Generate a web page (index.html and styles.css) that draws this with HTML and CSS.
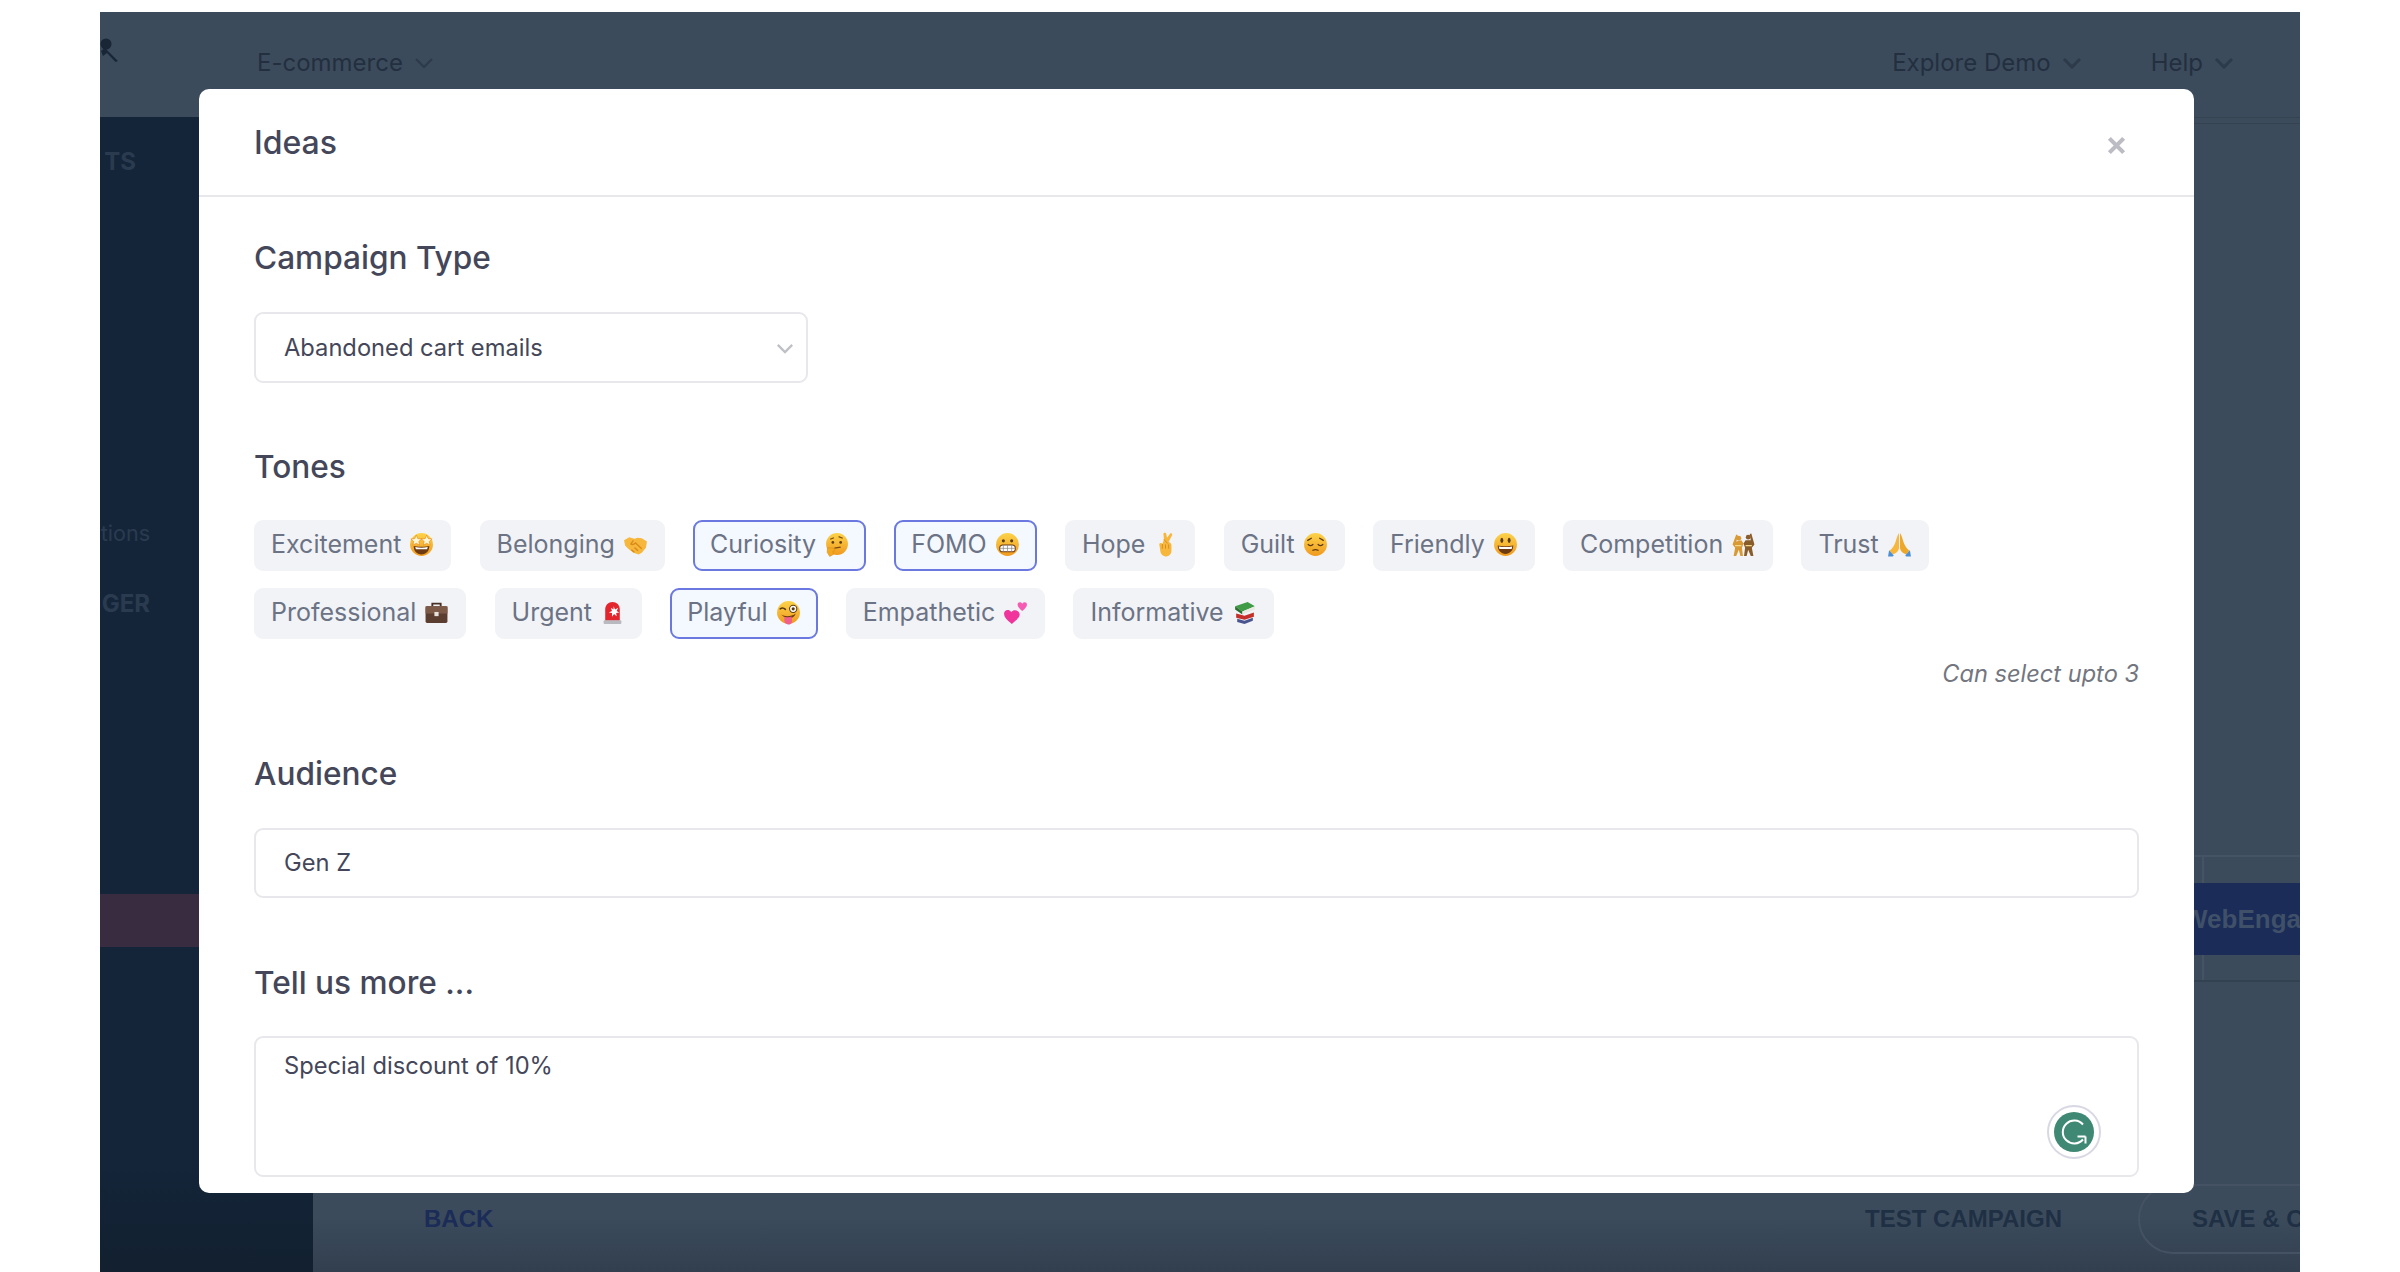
FILE: index.html
```html
<!DOCTYPE html>
<html lang="en">
<head>
<meta charset="utf-8">
<title>Ideas</title>
<link rel="stylesheet" href="styles.css">
</head>
<body>
<svg class="defs" width="0" height="0" aria-hidden="true">
  <defs>
    <linearGradient id="face" x1="0" y1="0" x2="0" y2="1"><stop offset="0" stop-color="#fcd34a"/><stop offset="1" stop-color="#f09a1e"/></linearGradient>
    <symbol id="e-star" viewBox="0 0 24 24"><circle cx="12" cy="12" r="11" fill="url(#face)"/><path d="M4.500 13.500c3 1 12 1 15 0 0 5-3 8-7.500 8s-7.500-3-7.500-8z" fill="#6d3a12"/><path d="M6 14.500c4 .8 8 .8 12 0l-.6 2H6.600z" fill="#fff"/><path d="M7 3l1.500 3.400 3.700.3-2.800 2.400.9 3.600L7 10.800l-3.300 1.900.9-3.600-2.800-2.400 3.700-.3zM17 3l1.500 3.400 3.700.3-2.800 2.400.9 3.600-3.300-1.900-3.300 1.900.9-3.600-2.800-2.400 3.700-.3z" fill="#fff8d8" stroke="#e8871c" stroke-width=".6"/></symbol>
    <symbol id="e-shake" viewBox="0 0 24 24"><path d="M1 8l5-3 5 1.500 3-1 4 .5 5 3-1 6-4 5-3 1.500-5-1.500-5-4-3-3z" fill="#f6b73c"/><path d="M10 8l-2.500 3.500c1.500 1 3 .5 4.500-1l6 5.500M8 17l3 2.500M11 15l3.500 3" fill="none" stroke="#d98a1a" stroke-width="1.300"/></symbol>
    <symbol id="e-think" viewBox="0 0 24 24"><circle cx="12.500" cy="11.500" r="10.500" fill="url(#face)"/><path d="M6 7l3.500-1.500M14 4.500l4 1.500" stroke="#7a4a10" stroke-width="1.200" fill="none"/><circle cx="8.500" cy="10" r="1.300" fill="#5c3a12"/><circle cx="16" cy="10" r="1.300" fill="#5c3a12"/><path d="M10 15.500l6-1" stroke="#7a4a10" stroke-width="1.300"/><path d="M3.500 15l6 .5 1 2.500-2 .5.500 3-3.500 2-2.500-4z" fill="#f2a81f" stroke="#d98a1a" stroke-width=".5"/></symbol>
    <symbol id="e-grim" viewBox="0 0 24 24"><circle cx="12" cy="12" r="11" fill="url(#face)"/><circle cx="8" cy="8.500" r="1.500" fill="#5c3a12"/><circle cx="16" cy="8.500" r="1.500" fill="#5c3a12"/><rect x="4.500" y="12.500" width="15" height="6.500" rx="3" fill="#fff" stroke="#6d3a12"/><path d="M8 12.500v6.500M12 12.500v6.500M16 12.500v6.500M4.500 15.700h15" stroke="#888" stroke-width=".7"/></symbol>
    <symbol id="e-cross" viewBox="0 0 24 24"><path d="M6 11.500c.8-1.200 2.200-1.200 3 0L10.500 7 10 2c0-1.500 2.300-1.800 2.700-.2l.8 3.700 2.800-3.800c1-1.200 2.800 0 2 1.500l-3.300 6.300c2 .5 2.700 2 2.700 3.500v5c0 3.200-2.500 5.500-5 5.500s-5.500-2-5.700-5.500z" fill="#f6b73c"/><path d="M10.500 7l3.500 4M9 11.500V16M12 12v4M15 12v4" stroke="#d98a1a" stroke-width=".9" fill="none"/></symbol>
    <symbol id="e-pens" viewBox="0 0 24 24"><circle cx="12" cy="12" r="11" fill="url(#face)"/><path d="M4.500 8l3.500-2M19.500 8L16 6M5 12c1.500 1.500 3 1.500 4.500 0M14.500 12c1.500 1.500 3 1.500 4.500 0M9.500 17.500c1.500-.7 3.500-.7 5 0" fill="none" stroke="#5c3a12" stroke-width="1.200" stroke-linecap="round"/></symbol>
    <symbol id="e-grin" viewBox="0 0 24 24"><circle cx="12" cy="12" r="11" fill="url(#face)"/><ellipse cx="8.500" cy="8" rx="1.400" ry="2.500" fill="#5c3a12"/><ellipse cx="15.500" cy="8" rx="1.400" ry="2.500" fill="#5c3a12"/><path d="M4.500 13c4 1 11 1 15 0 0 5-3.500 8-7.500 8s-7.500-3-7.500-8z" fill="#6d3a12"/><path d="M5.500 13.800c4 .8 9 .8 13 0l-.6 2.500H6.100z" fill="#fff"/></symbol>
    <symbol id="e-wrest" viewBox="0 0 24 24"><circle cx="7.500" cy="6" r="2.300" fill="#d99a35"/><circle cx="16.500" cy="5" r="2.300" fill="#8a5c2a"/><path d="M5 9l5-1 2 3-1.500 4 1 8H9l-1.500-6L5 23H2.500L4 15 1.500 12 5 2.500l1.500.5L5.500 8z" fill="#d99a35"/><path d="M19 8l-5 0-2 3 1.500 4-1 8H15l1.500-6 2.500 6h2.500L20 15l2.500-3L19.500 1.500l-1.500.5L19 8z" fill="#8a5c2a"/><path d="M4 13h6M14 13h6" stroke="#f2d98a" stroke-width="1.200"/></symbol>
    <symbol id="e-pray" viewBox="0 0 24 24"><path d="M11.500 1C10 3 9 7 8 10c-1 3-3 6-5.500 8l3 3.500c3-1 5.500-3 6-6z" fill="#f6b73c"/><path d="M12.500 1C14 3 15 7 16 10c1 3 3 6 5.500 8l-3 3.500c-3-1-5.500-3-6-6z" fill="#eda82c"/><path d="M2 17.500l4.500 5-1 1H1zM22 17.500l-4.500 5 1 1H23z" fill="#4a8fd8"/></symbol>
    <symbol id="e-case" viewBox="0 0 24 24"><path d="M8 6V3.500h8V6" fill="none" stroke="#4a3024" stroke-width="1.800"/><rect x="1.500" y="6" width="21" height="16" rx="1.500" fill="#5c3e30"/><rect x="1.500" y="6" width="21" height="7" fill="#7d5a48"/><rect x="10" y="11.500" width="4" height="4" fill="#e9e2dc"/></symbol>
    <symbol id="e-siren" viewBox="0 0 24 24"><path d="M5 20V9c0-4 3-7 7-7s7 3 7 7v11z" fill="#e3262e"/><path d="M13 6l1.500 3 3-1.500-1.500 3 2.500 1.500-3 .5.500 3-2.500-2-2 2.500v-3.500l-3-.5 3-1.500-1-3 2.500 1.500z" fill="#fff"/><rect x="3.500" y="19.500" width="17" height="3.500" rx="1" fill="#b9b9c0"/></symbol>
    <symbol id="e-wink" viewBox="0 0 24 24"><circle cx="12" cy="12" r="11" fill="url(#face)"/><path d="M4 8.500c1.500-1 3.500-1 5 .5" fill="none" stroke="#5c3a12" stroke-width="1.500" stroke-linecap="round"/><circle cx="16.500" cy="8.500" r="3.500" fill="#fff" stroke="#5c3a12"/><circle cx="16.500" cy="8.500" r="1.500" fill="#5c3a12"/><path d="M5 14c4 2.500 10 2 14-1-1 3-3.500 4.500-6 5-1-.5-5.500-1-8-4z" fill="#6d3a12"/><path d="M8 16c2 .8 5 .8 7-.2l.5 5c-.5 2-2.500 3-4 2.800S8 22 8 20z" fill="#f0608c"/></symbol>
    <symbol id="e-hearts" viewBox="0 0 24 24"><path d="M8.500 23C4 19.500 1 16.500 1 13c0-3.500 4.500-5 7-1.500C10.500 8.500 16 10 16 14c0 3-4 6-7.500 9z" fill="#f0349c"/><path d="M18.500 10.500C16 8.500 14 6.500 14 4.500c0-2.500 3-3 4.500-1 1.500-2 4.500-1.500 4.500 1 0 2-2 4-4.500 6z" fill="#f65bb4"/></symbol>
    <symbol id="e-books" viewBox="0 0 24 24"><path d="M3 6l12-4 7 4-12 5z" fill="#3f9b45"/><path d="M3 6l7 5v3L3 9z" fill="#2a6f30"/><path d="M10 11l12-5v3l-12 5z" fill="#e9e9e2"/><path d="M4 13l8 2 9-3v4l-9 3-8-2z" fill="#c42f2a"/><path d="M5 18l7 2 8-3v3l-8 3-7-2z" fill="#4a558f"/></symbol>
  </defs>
</svg>

<div class="frame">
  <header class="topbar">
    <svg class="logo" viewBox="0 0 18 24" aria-hidden="true"><circle cx="6" cy="6" r="5.500" fill="#182636"/><path d="M1 13L5 10l13 13-2.500 1L7 15l-4 3z" fill="#182636"/></svg>
    <span class="crumb">E-commerce<svg class="chev" viewBox="0 0 20 12"><path d="M2 2l8 8 8-8"/></svg></span>
    <nav class="topnav">
      <span class="crumb">Explore Demo<svg class="chev chev-strong" viewBox="0 0 20 12"><path d="M2 2l8 8 8-8"/></svg></span>
      <span class="crumb">Help<svg class="chev chev-strong" viewBox="0 0 20 12"><path d="M2 2l8 8 8-8"/></svg></span>
    </nav>
  </header>

  <div class="workspace">
    <aside class="sidebar">
      <div class="side-item side-head side-a">TS</div>
      <div class="side-item side-b">tions</div>
      <div class="side-item side-head side-c">GER</div>
      <div class="side-active"></div>
    </aside>
    <main class="main">
      <div class="stage">
        <div class="panel">
          <div class="banner"><span>WebEnga</span></div>
        </div>
      </div>
      <footer class="footer">
        <span class="back">BACK</span>
        <span class="test">TEST CAMPAIGN</span>
        <span class="save">SAVE &amp; C</span>
      </footer>
    </main>
  </div>

  <section class="modal">
    <div class="modal-head">
      <h1 class="modal-title">Ideas</h1>
      <svg class="close" viewBox="0 0 16 16" aria-label="Close"><path d="M2 2l12 12M14 2L2 14"/></svg>
    </div>
    <div class="modal-body">
      <h2 class="label label-type">Campaign Type</h2>
      <div class="field select">Abandoned cart emails<svg class="select-chev" viewBox="0 0 20 12"><path d="M2 2l8 8 8-8"/></svg></div>

      <h2 class="label label-tones">Tones</h2>
      <div class="tags">
        <span class="tag">Excitement <svg class="emoji"><use href="#e-star"/></svg></span>
        <span class="tag">Belonging <svg class="emoji"><use href="#e-shake"/></svg></span>
        <span class="tag on">Curiosity <svg class="emoji"><use href="#e-think"/></svg></span>
        <span class="tag on">FOMO <svg class="emoji"><use href="#e-grim"/></svg></span>
        <span class="tag">Hope <svg class="emoji"><use href="#e-cross"/></svg></span>
        <span class="tag">Guilt <svg class="emoji"><use href="#e-pens"/></svg></span>
        <span class="tag">Friendly <svg class="emoji"><use href="#e-grin"/></svg></span>
        <span class="tag">Competition <svg class="emoji"><use href="#e-wrest"/></svg></span>
        <span class="tag">Trust <svg class="emoji"><use href="#e-pray"/></svg></span>
        <span class="tag">Professional <svg class="emoji"><use href="#e-case"/></svg></span>
        <span class="tag">Urgent <svg class="emoji"><use href="#e-siren"/></svg></span>
        <span class="tag on">Playful <svg class="emoji"><use href="#e-wink"/></svg></span>
        <span class="tag">Empathetic <svg class="emoji"><use href="#e-hearts"/></svg></span>
        <span class="tag">Informative <svg class="emoji"><use href="#e-books"/></svg></span>
      </div>
      <p class="hint">Can select upto 3</p>

      <h2 class="label label-aud">Audience</h2>
      <div class="field input">Gen Z</div>

      <h2 class="label label-more">Tell us more ...</h2>
      <div class="field area">
        Special discount of 10%
        <span class="grammarly">
          <svg viewBox="0 0 40 40" aria-hidden="true"><circle cx="20" cy="20" r="20" fill="#3f8874"/><path d="M29 12.500A11.500 11.500 0 1 0 29 27.500M31.500 24.500H23.500M31.500 24.500v7" fill="none" stroke="#fff" stroke-width="2"/></svg>
        </span>
      </div>
    </div>
  </section>
</div>
</body>
</html>
```

FILE: styles.css
```css
* { box-sizing: border-box; }
html, body { margin: 0; height: 1272px; background: #fff; overflow: hidden; }
body { font-family: Inter, "Noto Sans", sans-serif; padding: 12px 100px 0; }
.defs { position: absolute; }

.frame {
  position: relative;
  height: 1260px;
  overflow: hidden;
  background: #3b4b5c;
  display: flex;
  flex-direction: column;
}

.topbar {
  height: 105px;
  flex: none;
  display: flex;
  align-items: flex-start;
  padding: 36px 66px 0 157px;
  font-size: 24px;
  color: #232f3f;
  position: relative;
}
.logo { position: absolute; left: 0; top: 26px; width: 18px; height: 24px; }
.crumb { display: inline-flex; align-items: center; line-height: 29px; }
.chev { width: 20px; height: 12px; margin-left: 11px; fill: none; stroke: #2c3a4a; stroke-width: 2; }
.chev-strong { stroke-width: 3; margin-left: 11px; }
.topnav { margin-left: auto; display: flex; gap: 69px; }

.workspace { flex: 1; display: flex; min-height: 0; }
.sidebar {
  width: 213px;
  flex: none;
  background: linear-gradient(#14253a 90%, #12202f);
  display: flex;
  flex-direction: column;
}
.side-item { width: 50px; display: flex; justify-content: flex-end; white-space: nowrap; font-size: 21.500px; line-height: 30px; color: #2b3b4f; }
.side-head { font-size: 24px; font-weight: 700; }
.side-a { width: 36px; margin-top: 30px; }
.side-b { margin-top: 341px; }
.side-c { margin-top: 41px; }
.side-active { height: 53px; margin-top: 275px; background: #3a2c40; }

.main { flex: 1; display: flex; flex-direction: column; min-width: 0; }
.stage { flex: 1; display: flex; flex-direction: column; justify-content: flex-end; padding-bottom: 181px; border-top: 1px solid #34434f; position: relative; }
.stage::before { content: ""; position: absolute; left: 0; right: 0; top: 5px; height: 1px; background: #34434f; }
.panel { position: relative; border-top: 2px solid #455464; border-bottom: 2px solid #334251; padding: 26px 0 25px; margin-left: 1400px; }
.panel::before { content: ""; position: absolute; left: 489px; top: 0; bottom: 0; width: 2px; background: #455464; }
.banner { position: relative; height: 72px; background: #1a2c57; font-family: "Liberation Sans", Arial, sans-serif; font-weight: 700; font-size: 26px; color: #3f5068; display: flex; align-items: center; padding-left: 470px; white-space: nowrap; overflow: hidden; }

.footer {
  height: 109px;
  flex: none;
  display: flex;
  align-items: center;
  padding: 2px 0 0 111px;
  font-family: "Liberation Sans", Arial, sans-serif;
  font-weight: 700;
  font-size: 24px;
  color: #1f3044;
  white-space: nowrap;
  background: linear-gradient(#3b4b5c, #3b4b5c 50%, #323f4f);
}
.back { color: #1a2c57; }
.test { margin-left: auto; }
.save {
  margin-left: 76px;
  margin-right: -116px;
  width: 278px;
  height: 70px;
  display: flex;
  align-items: center;
  padding-left: 52px;
  border: 2px solid #445263;
  border-radius: 35px;
}

.modal {
  position: absolute;
  left: 99px;
  top: 77px;
  width: 1995px;
  height: 1104px;
  background: #fff;
  border-radius: 10px;
  overflow: hidden;
  color: #44475a;
}
.modal-head {
  height: 108px;
  display: flex;
  align-items: center;
  justify-content: space-between;
  padding: 0 68px 0 55px;
  border-bottom: 2px solid #e8e8ec;
}
.modal-title { margin: 2px 0 0; font-size: 32px; font-weight: 500; line-height: 40px; }
.close { width: 19px; height: 19px; fill: none; stroke: #bcbdc4; stroke-width: 3.500; margin-top: 6px; }

.modal-body { padding: 0 55px; }
.label { margin: 0; font-size: 31.600px; font-weight: 500; line-height: 40px; }
.label-type { margin-top: 41px; margin-bottom: 34px; }
.label-tones { margin-top: 64px; margin-bottom: 33px; }
.label-aud { margin-top: 65px; margin-bottom: 34px; }
.label-more { margin-top: 65px; margin-bottom: 33px; }

.field {
  border: 2px solid #e8e8ec;
  border-radius: 9px;
  font-size: 23.700px;
  line-height: 30px;
  padding-left: 28px;
  position: relative;
}
.select { width: 554px; height: 71px; display: flex; align-items: center; justify-content: space-between; padding-right: 12px; }
.select-chev { width: 18px; height: 11px; fill: none; stroke: #bfc0c6; stroke-width: 2.500; margin-top: 2px; }
.input { height: 70px; display: flex; align-items: center; }
.area { height: 141px; padding-top: 13px; }

.grammarly {
  position: absolute;
  right: 36px;
  bottom: 16px;
  width: 54px;
  height: 54px;
  border-radius: 50%;
  border: 2px solid #d8d8e4;
  background: #fff;
  display: flex;
  align-items: center;
  justify-content: center;
}
.grammarly svg { width: 40px; height: 40px; }

.tags { display: flex; flex-wrap: wrap; gap: 17px 28.200px; }
.tag {
  height: 51px;
  display: inline-flex;
  align-items: center;
  padding: 0 15px 3px;
  border-radius: 9px;
  background: #f2f3f7;
  color: #6b7385;
  font-size: 25px;
  white-space: pre;
  border: 2px solid #f2f3f7;
}
.tag.on { background: #f4f8ff; border-color: #6a78e0; }
.emoji { width: 25px; height: 25px; margin-left: 1px; flex: none; }

.hint { margin: 20px 0 0; text-align: right; font-size: 23.600px; line-height: 30px; font-style: italic; color: #73767f; }
```
